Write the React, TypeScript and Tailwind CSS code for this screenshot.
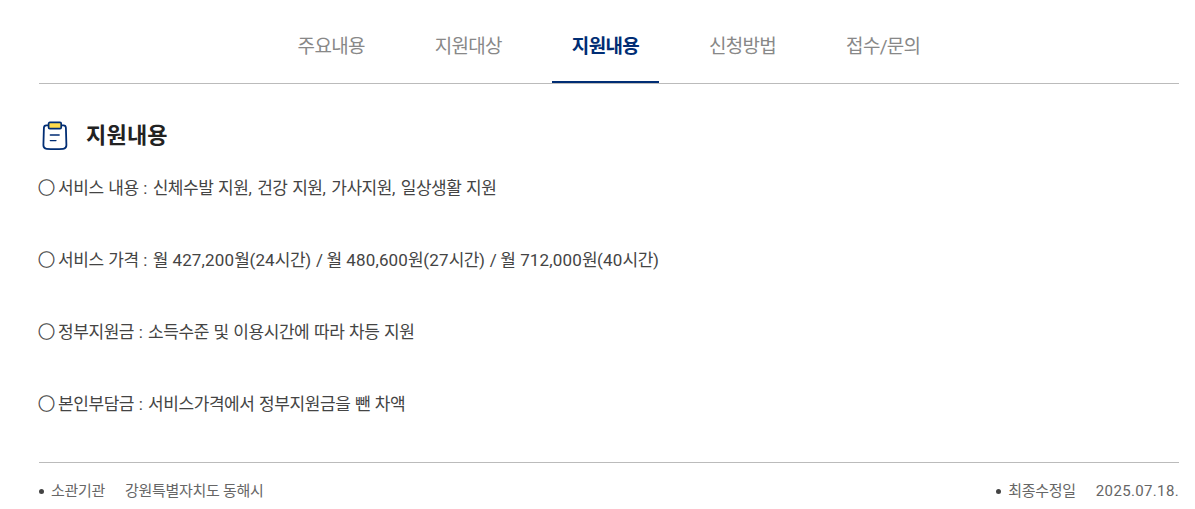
import React from "react";

const tabs = ["주요내용", "지원대상", "지원내용", "신청방법", "접수/문의"];

const lines = [
  "서비스 내용 : 신체수발 지원, 건강 지원, 가사지원, 일상생활 지원",
  "서비스 가격 : 월 427,200월(24시간) / 월 480,600원(27시간) / 월 712,000원(40시간)",
  "정부지원금 : 소득수준 및 이용시간에 따라 차등 지원",
  "본인부담금 : 서비스가격에서 정부지원금을 뺀 차액",
];

// Numbers and punctuation are set a little wider than the Hangul
function partClass(part: string) {
  if (/[0-9()]/.test(part)) return "tracking-[0.15px]";
  if (part === "/") return "tracking-[-1px]";
  return "tracking-[0.7px]";
}

function renderLine(line: string) {
  return line.split(/([0-9(][0-9,(]*|[:,/)])/).map((part, index) => {
    if (index % 2 === 0) return part;
    return (
      <span key={index} className={partClass(part)}>
        {part}
      </span>
    );
  });
}

function ClipboardIcon() {
  return (
    <svg width="32" height="32" viewBox="0 0 32 32" fill="none">
      <path
        d="M9.5 5.3H7.3Q5 5.3 4.9 7.8L4.4 25.3Q4.4 28.5 7.6 28.8Q16 29.6 24.2 28.8Q27.4 28.5 27.4 25.3L26.9 7.8Q26.8 5.3 24.5 5.3H22.5"
        stroke="#002d74"
        strokeWidth="1.8"
      />
      <rect
        x="9.6"
        y="2.4"
        width="12.6"
        height="6.2"
        rx="1.2"
        fill="#ffdb4d"
        stroke="#002d74"
        strokeWidth="1.7"
      />
      <path
        d="M11.3 15H20.2M11.3 20.6H17"
        stroke="#002d74"
        strokeWidth="1.3"
        strokeLinecap="round"
      />
    </svg>
  );
}

export default function App() {
  return (
    <div className="h-[509px] overflow-hidden bg-white pl-[39px] pr-4 font-['Roboto','Noto_Sans_CJK_KR',sans-serif] text-[#444]">
      <ul className="flex h-[84px] justify-center gap-[30px] border-b border-[#bbb]">
        {tabs.map((tab) => (
          <li
            key={tab}
            className={`flex h-[83px] items-center px-5 text-[19px] tracking-[-0.7px] ${
              tab === "지원내용"
                ? "border-b-2 border-[#002d74] pt-[13px] font-bold text-[#002d74]"
                : "pt-[11px] text-[#888]"
            }`}
          >
            {tab}
          </li>
        ))}
      </ul>

      <div className="mt-9 flex h-8 items-center">
        <ClipboardIcon />
        <h2 className="ml-[15px] pb-0.5 text-[22px] font-bold tracking-[0.2px] text-[#222]">
          지원내용
        </h2>
      </div>

      <div className="mt-[19px] h-[291px]">
        {lines.map((line) => (
          <p
            key={line}
            className="mb-[36px] flex h-9 items-center whitespace-nowrap text-[17px] tracking-[-0.43px]"
          >
            <span className="-ml-px w-5 [-webkit-text-stroke:0.4px_#444]">○</span>
            <span className="[word-spacing:0.8px]">{renderLine(line)}</span>
          </p>
        ))}
      </div>

      <div className="flex h-[57px] items-center justify-between border-t border-[#bbb] text-[15px] tracking-[-0.3px] text-[#666]">
        <div className="flex items-center">
          <i className="mr-[7px] size-[5px] rounded-full bg-[#444]" />
          <span>소관기관</span>
          <span className="ml-5">강원특별자치도 동해시</span>
        </div>
        <div className="flex items-center">
          <i className="mr-[7px] size-[5px] rounded-full bg-[#444]" />
          <span>최종수정일</span>
          <span className="ml-5 tracking-[0.35px]">2025.07.18.</span>
        </div>
      </div>
    </div>
  );
}
